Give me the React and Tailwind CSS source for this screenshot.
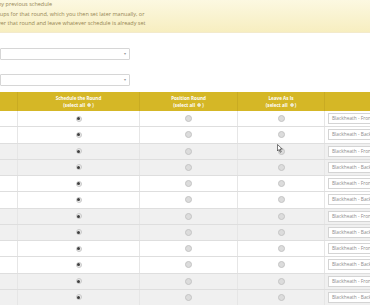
import React from 'react';

const rows = [
  { label: 'Blackheath - Front', shade: false },
  { label: 'Blackheath - Back', shade: false },
  { label: 'Blackheath - Front', shade: true },
  { label: 'Blackheath - Back', shade: true },
  { label: 'Blackheath - Front', shade: false },
  { label: 'Blackheath - Back', shade: false },
  { label: 'Blackheath - Front', shade: true },
  { label: 'Blackheath - Back', shade: true },
  { label: 'Blackheath - Front', shade: false },
  { label: 'Blackheath - Back', shade: false },
  { label: 'Blackheath - Front', shade: true },
  { label: 'Blackheath - Back', shade: true },
];

function Radio({ checked }) {
  if (checked) {
    return (
      <span className="w-[6px] h-[6px] rounded-full bg-[#e9e9e9] border border-[#c9c9c9] flex items-center justify-center">
        <span className="w-[3px] h-[3px] rounded-full bg-[#3f3f3f]" />
      </span>
    );
  }
  return <span className="w-[7px] h-[7px] rounded-full bg-[#dcdcdc] border border-[#c4c4c4]" />;
}

function SelectAll() {
  return (
    <span className="inline-flex items-center gap-[1px]">
      (select all
      <span className="inline-block w-[4px] h-[4px] rounded-full bg-[#f3f0dc] border border-[#e8e2b8] ml-[1px]" />
      )
    </span>
  );
}

function FakeSelect() {
  return (
    <div className="w-[130px] h-[12px] bg-white border border-[#d6d6d6] rounded-[1px] flex items-center justify-end pr-[3px]">
      <span className="text-[4px] text-[#999] leading-none">▾</span>
    </div>
  );
}

export default function App() {
  return (
    <div className="relative w-[370px] h-[305px] overflow-hidden bg-white font-['Open_Sans',sans-serif]">
      {/* Warning banner */}
      <div className="h-[33px] bg-gradient-to-b from-[#fcf8e1] to-[#f7eec0] border-b border-[#f3eacb]">
        <div className="-ml-[2px] text-[5.5px] leading-[9.5px] text-[#958553] whitespace-nowrap">
          <div>ny previous schedule</div>
          <div>-ups for that round, which you then set later manually, or</div>
          <div>ver that round and leave whatever schedule is already set</div>
        </div>
      </div>

      {/* Selects */}
      <div className="pt-[15px] flex flex-col gap-[14px]">
        <FakeSelect />
        <FakeSelect />
      </div>

      {/* Table */}
      <div className="mt-[6px] w-[380px]">
        <div className="grid grid-cols-[18px_122px_98px_87px_1fr] h-[19px] bg-[#d5b726] text-white font-bold text-[4.6px] leading-[6.5px] text-center">
          <div className="border-r border-[#c9ab22]" />
          <div className="border-r border-[#c9ab22] flex flex-col items-center justify-center">
            <span>Schedule the Round</span>
            <SelectAll />
          </div>
          <div className="border-r border-[#c9ab22] flex flex-col items-center justify-center">
            <span>Position Round</span>
            <SelectAll />
          </div>
          <div className="border-r border-[#c9ab22] flex flex-col items-center justify-center">
            <span>Leave As Is</span>
            <SelectAll />
          </div>
          <div />
        </div>

        {rows.map((r, i) => (
          <div
            key={i}
            className={`grid grid-cols-[18px_122px_98px_87px_1fr] h-[16.25px] border-b border-[#dedede] ${r.shade ? 'bg-[#f0f0f0]' : 'bg-white'}`}
          >
            <div className="border-r border-[#e6e6e6]" />
            <div className="border-r border-[#e6e6e6] flex items-center justify-center">
              <Radio checked />
            </div>
            <div className="border-r border-[#e6e6e6] flex items-center justify-center">
              <Radio />
            </div>
            <div className="border-r border-[#e6e6e6] flex items-center justify-center">
              <Radio />
            </div>
            <div className="flex items-center pl-[3px]">
              <div className="w-[60px] h-[11px] bg-white border border-[#d4d4d4] flex items-center pl-[3px] text-[4.8px] text-[#8c8c8c] whitespace-nowrap">
                {r.label}
              </div>
            </div>
          </div>
        ))}
      </div>

      {/* Mouse cursor */}
      <svg className="absolute left-[277px] top-[144px]" width="6" height="9" viewBox="0 0 12 18">
        <path d="M1 1 L1 14 L4 11 L6.5 16.5 L8.5 15.5 L6 10 L10.5 10 Z" fill="#fff" stroke="#222" strokeWidth="1.2" strokeLinejoin="round" />
      </svg>
    </div>
  );
}
